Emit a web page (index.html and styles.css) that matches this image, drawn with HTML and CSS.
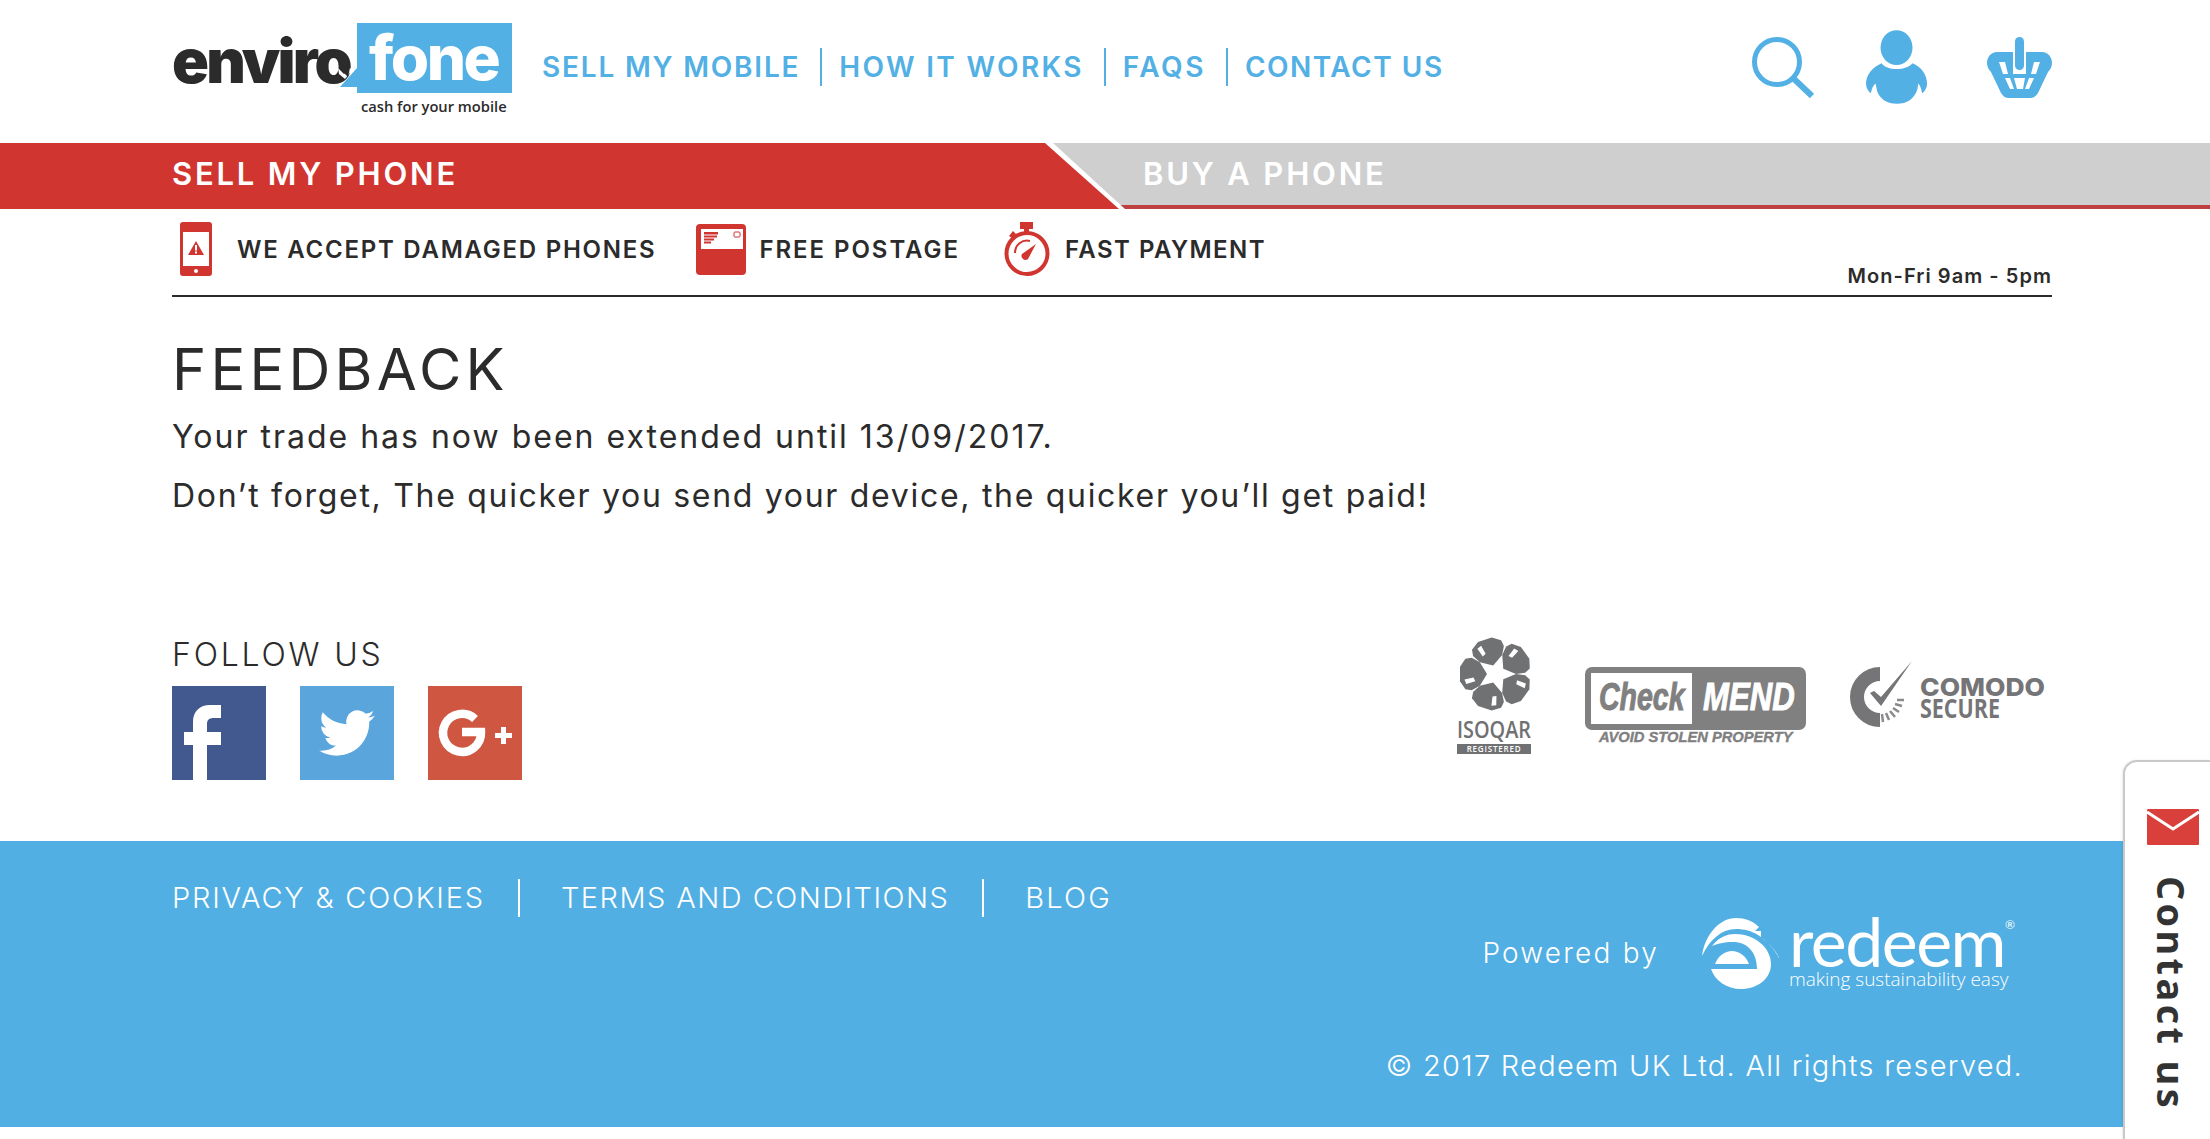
FILE: index.html
```html
<!DOCTYPE html>
<html lang="en">
<head>
<meta charset="utf-8">
<title>Feedback - Envirofone</title>
<link rel="stylesheet" href="styles.css">
</head>
<body>
<header class="site-header">
  <a class="logo">
    <span class="logo-enviro">enviro<svg class="logo-arrow" viewBox="0 0 16 16"><path d="M1 3 L7 9 L13 3 L15 5 L8 14 L2 9 Z" fill="#fff"/><path d="M5 6 L13 3 L11 12 Z" fill="#2b2b2b"/></svg></span>
    <span class="logo-bubble">fone</span>
    <span class="logo-tag">cash for your mobile</span>
  </a>
  <nav class="main-nav">
    <a>SELL MY MOBILE</a>
    <a>HOW IT WORKS</a>
    <a>FAQS</a>
    <a>CONTACT US</a>
  </nav>
  <div class="head-icons">
    <svg class="ic-search" viewBox="0 0 63 61"><circle cx="25" cy="25" r="22.500" fill="none" stroke="#52b0e4" stroke-width="5"/><path d="M41 41 L60 59" stroke="#52b0e4" stroke-width="6" fill="none"/></svg>
    <svg class="ic-person" viewBox="0 0 65 75"><ellipse cx="31.500" cy="17" rx="16.500" ry="18" fill="#52b0e4"/><path d="M16 33 C21 41 42 41 48 33 C58 37 63 46 63 54 C63 58 61 62 58 64 C57 60 56 56 54 54 L53 60 C50 70 42 75 32 75 C22 75 13 70 11 60 L10 54 C7 56 6 60 5 64 C2 62 0 58 0 54 C0 45 7 37 16 33 Z" fill="#52b0e4"/></svg>
    <svg class="ic-basket" viewBox="0 0 65 61"><path d="M10 15 H55 C61 15 65 20 65 26 C65 30 63 33 61 35 L51 56 C49 59 47 61 43 61 H22 C18 61 16 59 14 56 L4 35 C2 33 0 30 0 26 C0 20 4 15 10 15 Z" fill="#52b0e4"/><g fill="#fff"><path d="M12 25 H18 L21 37 H16 Z"/><path d="M53 25 H47 L44 37 H49 Z"/><path d="M26 27 H39 V37 H26 Z" /><path d="M18 41 H23 L27 52 H23 Z"/><path d="M27 41 H38 L36 52 H30 Z"/><path d="M47 41 H42 L38 52 H42 Z"/></g><path d="M26 5 C26 -2 39 -2 39 5 V27 C39 35 26 35 26 27 Z" fill="#fff"/><rect x="28" y="0" width="9" height="33" rx="4.500" fill="#52b0e4"/></svg>
  </div>
</header>

<div class="tabs">
  <div class="tab-sell">SELL MY PHONE</div>
  <svg class="tab-slope" viewBox="0 0 80 66" preserveAspectRatio="none"><rect width="80" height="66" fill="#cfcfcf"/><rect y="62" width="80" height="4" fill="#bf4040"/><path d="M0 0 H8 L80 66 H0 Z" fill="#fff"/><path d="M0 0 L74 66 H0 Z" fill="#d13530"/></svg>
  <div class="tab-buy">BUY A PHONE</div>
</div>

<div class="usp-bar">
  <div class="usp usp-damaged">
    <svg class="ic-phone" viewBox="0 0 32 54"><rect width="32" height="54" rx="3" fill="#d13530"/><rect x="3" y="10" width="26" height="34" fill="#fff"/><circle cx="16" cy="49" r="2" fill="#fff"/><path d="M16 19 L24 33 H8 Z" fill="#d13530"/><rect x="15" y="23" width="2" height="5.500" fill="#fff"/><rect x="15" y="29.500" width="2" height="2" fill="#fff"/></svg>
    <span>WE ACCEPT DAMAGED PHONES</span>
  </div>
  <div class="usp usp-post">
    <svg class="ic-post" viewBox="0 0 50 51"><rect width="50" height="51" rx="4" fill="#d13530"/><rect x="5" y="5" width="42" height="20" fill="#fff"/><g fill="#d13530"><rect x="8" y="8" width="14" height="2.500"/><rect x="8" y="11.500" width="13" height="2"/><rect x="8" y="14.500" width="10" height="2"/><rect x="8" y="17.500" width="7" height="2"/></g><rect x="38" y="8" width="6" height="5" rx="1" fill="none" stroke="#d13530"/></svg>
    <span>FREE POSTAGE</span>
  </div>
  <div class="usp usp-fast">
    <svg class="ic-watch" viewBox="0 0 46 54"><rect x="16" y="0" width="13" height="7" fill="#d13530"/><rect x="20" y="6" width="5" height="5" fill="#d13530"/><path d="M5 14 L9 9 L12 12 L8 16 Z" fill="#d13530"/><circle cx="23" cy="31.500" r="20.500" fill="none" stroke="#d13530" stroke-width="4"/><path d="M11 31 A12 12 0 0 1 26 19" fill="none" stroke="#d13530" stroke-width="2"/><path d="M32 22 L24 37 A4 4 0 0 1 18 32 Z" fill="#d13530"/></svg>
    <span>FAST PAYMENT</span>
  </div>
  <div class="hours">Mon-Fri 9am - 5pm</div>
</div>

<main class="content">
  <h1>FEEDBACK</h1>
  <p>Your trade has now been extended until 13/09/2017.</p>
  <p>Don’t forget, The quicker you send your device, the quicker you’ll get paid!</p>
</main>

<section class="connect">
  <div class="follow">
    <h2>FOLLOW US</h2>
    <div class="socials">
      <svg class="soc" viewBox="0 0 94 94"><rect width="94" height="94" fill="#41598f"/><path d="M21 94 V59 H12 V46 H21 V36 C21 25 28 19 38 19 H49 V32 H42 C37 32 35 34 35 38 V46 H49 V59 H35 V94 Z" fill="#fff"/></svg>
      <svg class="soc" viewBox="0 0 94 94"><rect width="94" height="94" fill="#5aa5dc"/><path transform="translate(19 19) scale(2.33)" d="M23.950 4.570a10 10 0 0 1-2.820.77 4.960 4.960 0 0 0 2.160-2.720c-.95.55-2 .95-3.120 1.180a4.920 4.920 0 0 0-8.380 4.480C7.690 8.090 4.070 6.130 1.640 3.160a4.820 4.820 0 0 0-.67 2.480c0 1.710.87 3.210 2.190 4.100a4.900 4.900 0 0 1-2.230-.62v.06a4.920 4.920 0 0 0 3.950 4.830 5 5 0 0 1-2.210.08 4.930 4.930 0 0 0 4.600 3.420A9.870 9.870 0 0 1 0 19.540a14 14 0 0 0 7.560 2.210c9.050 0 14-7.500 14-13.980 0-.21 0-.42-.02-.63A9.940 9.940 0 0 0 24 4.590z" fill="#fff"/></svg>
      <svg class="soc" viewBox="0 0 94 94"><rect width="94" height="94" fill="#cf5742"/><path d="M47 33 A19 19 0 1 0 53 46 H34" fill="none" stroke="#fff" stroke-width="8.500"/><path d="M73 41 H78 V47 H84 V52 H78 V58 H73 V52 H67 V47 H73 Z" fill="#fff"/></svg>
    </div>
  </div>
  <div class="badges">
    <svg class="badge-iso" viewBox="0 0 74 116">
      <defs><g id="petal"><path d="M0 -10 L-13 -18 L-18 -27 L-17 -34 L-8 -40 L8 -40 L17 -34 L18 -27 L13 -18 Z" fill="#707173"/><path d="M-11 -33 L-6 -35 L-4 -25 L-8 -23 Z" fill="#fff"/></g></defs>
      <g transform="translate(39 36) scale(.9)"><use href="#petal" transform="rotate(-90)"/><use href="#petal" transform="rotate(-18)"/><use href="#petal" transform="rotate(54)"/><use href="#petal" transform="rotate(126)"/><use href="#petal" transform="rotate(198)"/></g>
      <text class="iso-name" x="0" y="100" textLength="74" lengthAdjust="spacingAndGlyphs">ISOQAR</text>
      <rect x="0" y="106" width="74" height="10" fill="#707173"/>
      <text class="iso-reg" x="37" y="114" text-anchor="middle">REGISTERED</text>
    </svg>
    <svg class="badge-check" viewBox="0 0 222 78">
      <rect width="221" height="63" rx="7" fill="#808081"/>
      <rect x="6" y="6" width="101" height="51" fill="#fff"/>
      <text class="chk chk-a" transform="translate(14 43) scale(.75 1)">Check</text>
      <text class="chk chk-b" transform="translate(118 43) scale(.82 1)">MEND</text>
      <text class="chk-tag" transform="translate(14 75) scale(.98 1)">AVOID STOLEN PROPERTY</text>
    </svg>
    <svg class="badge-como" viewBox="0 0 195 66">
      <path d="M29 14 A21 21 0 1 0 29 60" fill="none" stroke="#757577" stroke-width="14"/>
      <path d="M19 33 L30 46 L61 1 L30 37 L23 31 Z" fill="#757577"/>
      <g stroke="#8a8a8c" stroke-width="2.500"><path d="M46 40 H53"/><path d="M44 44 L51 46"/><path d="M42 48 L48 52"/><path d="M39 51 L44 57"/><path d="M35 53 L38 60"/><path d="M31 54 L32 62"/></g>
      <text class="como-a" x="69" y="36" textLength="125" lengthAdjust="spacingAndGlyphs">COMODO</text>
      <text class="como-b" x="69" y="58" textLength="80" lengthAdjust="spacingAndGlyphs">SECURE</text>
    </svg>
  </div>
</section>

<footer class="site-footer">
  <nav class="foot-links">
    <a>PRIVACY &amp; COOKIES</a>
    <a>TERMS AND CONDITIONS</a>
    <a>BLOG</a>
  </nav>
  <div class="powered">
    <span class="powered-by">Powered by</span>
    <svg class="redeem-mark" viewBox="8 10 82 75"><path d="M10 50 C13 28 28 12 44 12 C53 12 61 15 67 21 L63 25 L69 25 L69 31 C78 38 85 46 88 54 C82 42 74 34 66 29 C60 25 52 23 44 23 C30 23 18 33 10 50 Z" fill="#fff"/><path d="M20 40 C27 31 35 28 43 28 C62 28 79 41 79 58 C79 73 65 83 49 83 C35 83 23 75 19 63 H65 C65 46 55 36 41 36 C32 36 25 38 20 40 Z" fill="#fff"/><path d="M23 58 C26 50 33 45 40 45 C47 45 54 50 57 58 Z" fill="#fff"/></svg>
    <div class="redeem-word">
      <span class="redeem-name">redeem<sup>®</sup></span>
      <span class="redeem-tag">making sustainability easy</span>
    </div>
  </div>
  <div class="copyright">© 2017 Redeem UK Ltd. All rights reserved.</div>
</footer>

<aside class="contact-tab">
  <svg class="ic-mail" viewBox="0 0 52 36"><rect width="52" height="36" rx="1" fill="#d9403b"/><path d="M0 3 L26 20 L52 3" fill="none" stroke="#fff" stroke-width="3"/></svg>
  <span class="contact-text">Contact us</span>
</aside>
</body>
</html>
```

FILE: styles.css
```css
* { box-sizing: border-box; }
html, body { margin: 0; padding: 0; }
body {
  position: relative;
  height: 1139px;
  overflow: hidden;
  background: #fff;
  color: #2b2b2b;
  font-family: Inter, "Liberation Sans", sans-serif;
}
svg { display: block; flex: none; overflow: visible; }

.site-header {
  display: flex;
  align-items: flex-start;
  height: 143px;
  padding: 0 158px 0 172px;
}
.logo {
  display: grid;
  grid-template-columns: 185px 155px;
  grid-template-rows: 70px 26px;
  width: 370px;
  margin-top: 23px;
}
.logo-enviro {
  position: relative;
  font-weight: 900;
  font-size: 61px;
  letter-spacing: -2.800px;
  line-height: 70px;
  color: #2b2b2b;
  padding-top: 3px;
}
.logo-arrow {
  position: absolute;
  left: 165px;
  top: 42px;
  width: 16px;
  height: 16px;
}
.logo-bubble {
  position: relative;
  background: #52b0e4;
  color: #fff;
  font-weight: 800;
  font-size: 62px;
  letter-spacing: -2.500px;
  line-height: 70px;
  padding-left: 12px;
}
.logo-bubble::before {
  content: "";
  position: absolute;
  left: -17px;
  bottom: 6px;
  border-style: solid;
  border-width: 0 0 19px 17px;
  border-color: transparent transparent #52b0e4 transparent;
}
.logo-tag {
  grid-column: 2;
  font-family: "Open Sans", sans-serif;
  font-size: 14.700px;
  font-weight: 600;
  line-height: 22px;
  padding: 2px 0 0 4px;
  white-space: nowrap;
  color: #2b2b2b;
}

.main-nav { display: flex; flex: 1; align-items: center; margin-top: 48px; }
.main-nav a {
  font-size: 28px;
  font-weight: 600;
  letter-spacing: 1.800px;
  color: #52b0e4;
  white-space: nowrap;
  line-height: 38px;
  padding: 0 20px 0 17px;
  border-left: 2px solid #52b0e4;
}
.main-nav a:first-child { border-left: 0; padding-left: 0; }
.main-nav a:nth-child(2) { letter-spacing: 2.350px; }
.main-nav a:nth-child(3) { letter-spacing: 2.500px; }
.main-nav a:nth-child(4) { letter-spacing: 1.500px; }

.head-icons { display: flex; align-items: flex-start; }
.ic-search { width: 63px; height: 61px; margin-top: 37px; }
.ic-person { width: 63px; height: 73px; margin-left: 51px; margin-top: 31px; }
.ic-basket { width: 65px; height: 61px; margin-left: 58px; margin-top: 37px; }

.tabs { display: flex; height: 66px; font-size: 31px; font-weight: 600; line-height: 62px; letter-spacing: 2.800px; }
.tab-sell {
  width: 1045px;
  padding-left: 172px;
  background: #d13530;
  color: #fff;
}
.tab-slope { width: 80px; height: 66px; }
.tab-buy {
  flex: 1;
  padding-left: 18px;
  background: #cfcfcf;
  border-bottom: 4px solid #bf4040;
  color: #fff;
}

.usp-bar {
  display: flex;
  align-items: center;
  height: 88px;
  margin: 0 158px 0 172px;
  border-bottom: 2px solid #2b2b2b;
  font-size: 24px;
  font-weight: 600;
  letter-spacing: 1.750px;
}
.usp { display: flex; align-items: center; margin-top: -6px; white-space: nowrap; }
.usp-post { letter-spacing: 1.950px; }
.usp-fast { letter-spacing: 1.450px; }
.ic-phone { width: 32px; height: 54px; margin: 0 25px 0 8px; }
.ic-post { width: 50px; height: 51px; margin: 1px 13px 0 40px; }
.ic-watch { width: 46px; height: 54px; margin: 0 15px 0 44px; }
.hours {
  margin-left: auto;
  align-self: flex-end;
  font-size: 20px;
  font-weight: 600;
  letter-spacing: 1.050px;
  line-height: 24px;
  padding-bottom: 7px;
  white-space: nowrap;
}

.content { padding: 40px 172px 0; }
.content h1 {
  margin: 0 0 6px;
  font-size: 58px;
  font-weight: 400;
  letter-spacing: 4.200px;
  line-height: 64px;
}
.content p {
  margin: 0;
  font-size: 32px;
  font-weight: 400;
  letter-spacing: 1.700px;
  line-height: 59px;
}
.content h1 + p { letter-spacing: 2px; }

.connect {
  display: flex;
  justify-content: space-between;
  margin: 113px 158px 61px 172px;
}
.follow { padding-top: 2px; }
.follow h2 {
  margin: 0 0 16px;
  font-size: 32px;
  font-weight: 300;
  letter-spacing: 2.800px;
  line-height: 30px;
}
.socials { display: flex; gap: 34px; }
.soc { width: 94px; height: 94px; }

.badges { display: flex; align-items: flex-start; padding-right: 6px; }
.badge-iso { width: 74px; height: 116px; }
.badge-check { width: 222px; height: 78px; margin: 29px 0 0 54px; }
.badge-como { width: 195px; height: 66px; margin: 22px 0 0 44px; }
.iso-name { font-family: "Open Sans", sans-serif; font-size: 24px; font-weight: 600; fill: #707173; }
.iso-reg { font-family: "Open Sans", sans-serif; font-size: 8px; font-weight: 600; letter-spacing: .8px; fill: #fff; }
.chk { font-family: "Liberation Sans", sans-serif; font-size: 38px; font-weight: 700; font-style: italic; stroke-width: 1px; }
.chk-a { fill: #808081; stroke: #808081; }
.chk-b { fill: #fff; stroke: #fff; }
.chk-tag { font-family: "Liberation Sans", sans-serif; font-size: 15px; font-weight: 700; font-style: italic; fill: #808081; stroke: #808081; stroke-width: .4px; }
.como-a { font-family: Inter, sans-serif; font-size: 25px; font-weight: 800; fill: #757577; }
.como-b { font-family: "Open Sans", sans-serif; font-size: 26px; font-weight: 700; fill: #757577; }

.site-footer {
  display: flex;
  flex-direction: column;
  height: 286px;
  padding: 38px 187px 0 172px;
  background: #51afe3;
  color: #fff;
}
.foot-links { display: flex; font-size: 29px; font-weight: 300; letter-spacing: 1.450px; }
.foot-links a {
  line-height: 38px;
  padding: 0 33px 0 41px;
  border-left: 2px solid #fff;
  white-space: nowrap;
}
.foot-links a:first-child { border-left: 0; padding-left: 0; letter-spacing: 1.800px; }
.foot-links a:last-child { letter-spacing: 2.200px; }
.powered {
  display: flex;
  align-items: center;
  align-self: flex-end;
  margin: -2px 8px 0 0;
}
.powered-by { font-size: 28px; font-weight: 300; letter-spacing: 2.200px; margin-right: 41px; white-space: nowrap; }
.redeem-mark { width: 82px; height: 75px; }
.redeem-word { display: flex; flex-direction: column; margin-left: 7px; }
.redeem-name {
  font-family: Lato, sans-serif;
  font-size: 68px;
  font-weight: 400;
  line-height: 52px;
  letter-spacing: -1.500px;
}
.redeem-name sup { font-size: 12px; vertical-align: 38px; line-height: 0; letter-spacing: 0; }
.redeem-tag {
  font-family: "Open Sans", sans-serif;
  font-size: 19px;
  font-weight: 300;
  line-height: 24px;
  white-space: nowrap;
}
.copyright { align-self: flex-end; margin-top: 57px; font-size: 29px; font-weight: 300; letter-spacing: 1.270px; white-space: nowrap; }

.contact-tab {
  position: absolute;
  top: 760px;
  right: 0;
  bottom: 0;
  width: 87px;
  background: #fff;
  border: 2px solid #c9c9c9;
  border-width: 2px 0 0 2px;
  border-top-left-radius: 14px;
  box-shadow: -1px 0 2px rgba(0,0,0,.08);
}
.ic-mail { width: 52px; height: 36px; margin: 47px 0 0 22px; }
.contact-text {
  display: block;
  writing-mode: vertical-rl;
  font-family: "Open Sans", sans-serif;
  font-size: 38px;
  font-weight: 700;
  letter-spacing: 3.300px;
  line-height: 44px;
  margin: 31px 0 0 25px;
  color: #333;
  white-space: nowrap;
}
```
